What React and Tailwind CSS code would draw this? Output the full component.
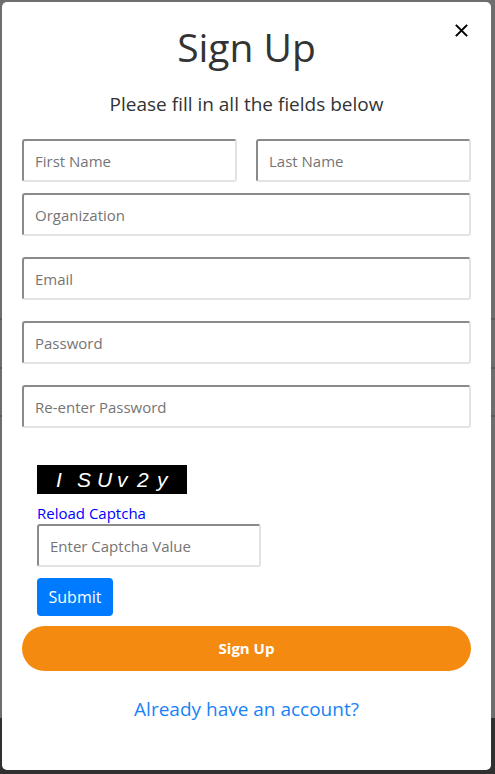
import React from 'react';

const font = { fontFamily: '"Segoe UI", "Open Sans", "Noto Sans", sans-serif' };

const inputCls =
  'block h-[43px] rounded-[3px] border-2 border-t-[#8a8a8a] border-l-[#8a8a8a] border-r-[#e3e3e3] border-b-[#e3e3e3] bg-white px-[11px] text-[15px] text-[#333] placeholder:text-[#757575] outline-none';

const Field = ({ placeholder, className = '' }) => (
  <input type="text" placeholder={placeholder} className={`${inputCls} ${className}`} />
);

const CloseIcon = () => (
  <svg width="15" height="15" viewBox="0 0 16 16" fill="none" stroke="#000" strokeWidth="2.2">
    <path d="M2 2l12 12M14 2L2 14" />
  </svg>
);

export default function App() {
  const captcha = ['I', 'S', 'U', 'v', '2', 'y'];

  return (
    <div className="relative h-[774px] w-[495px] overflow-hidden bg-[#6e6e6e]" style={font}>
      {/* page behind the overlay */}
      <div className="flex h-full flex-col">
        <div className="h-[318px]" />
        <div className="h-[49px] border-t-2 border-[#5c5c5c]" />
        <div className="h-[48px] border-t-2 border-[#5c5c5c]" />
        <div className="flex-1 border-t-2 border-[#5c5c5c]" />
        <div className="h-[56px] bg-[#303030]" />
      </div>

      {/* modal */}
      <div className="absolute left-[2px] top-[2px] h-[768px] w-[489px] rounded-[5px] bg-white px-[20px]">
        <button className="absolute right-[22px] top-[21px] p-0">
          <CloseIcon />
        </button>

        <h2 className="pt-[21px] text-center text-[39px] font-normal leading-[48px] text-[#333]">Sign Up</h2>
        <p className="mt-[20px] text-center text-[19px] leading-[26px] text-[#333]">
          Please fill in all the fields below
        </p>

        <div className="mt-[22px] flex gap-[19px]">
          <Field placeholder="First Name" className="w-[215px]" />
          <Field placeholder="Last Name" className="w-[215px]" />
        </div>
        <Field placeholder="Organization" className="mt-[11px] w-full" />
        <Field placeholder="Email" className="mt-[21px] w-full" />
        <Field placeholder="Password" className="mt-[21px] w-full" />
        <Field placeholder="Re-enter Password" className="mt-[21px] w-full" />

        <div className="px-[15px]">
          <div
            className="mt-[37px] flex h-[29px] w-[150px] items-center bg-black pl-[19px] text-[21px] italic text-white"
            style={{ fontFamily: '"Liberation Sans", Arial, sans-serif' }}
          >
            {captcha.map((c, i) => (
              <span key={i} className={i === 0 ? 'w-[21px]' : 'w-[20px]'}>
                {c}
              </span>
            ))}
          </div>
          <a href="#" className="mt-[9px] block text-[15px] leading-[20px] text-[#0000ff]">
            Reload Captcha
          </a>
          <Field placeholder="Enter Captcha Value" className="mt-[1px] w-[224px]" />
          <button className="mt-[11px] h-[38px] w-[76px] rounded-[4px] bg-[#007bff] text-[16px] text-white">
            Submit
          </button>
        </div>

        <button className="mt-[10px] h-[45px] w-full rounded-full bg-[#f48a0f] text-[15px] font-bold text-white">
          Sign Up
        </button>

        <div className="mt-[24px] text-center">
          <a href="#" className="text-[19px] leading-[28px] text-[#1a82f7]">
            Already have an account?
          </a>
        </div>
      </div>
    </div>
  );
}
